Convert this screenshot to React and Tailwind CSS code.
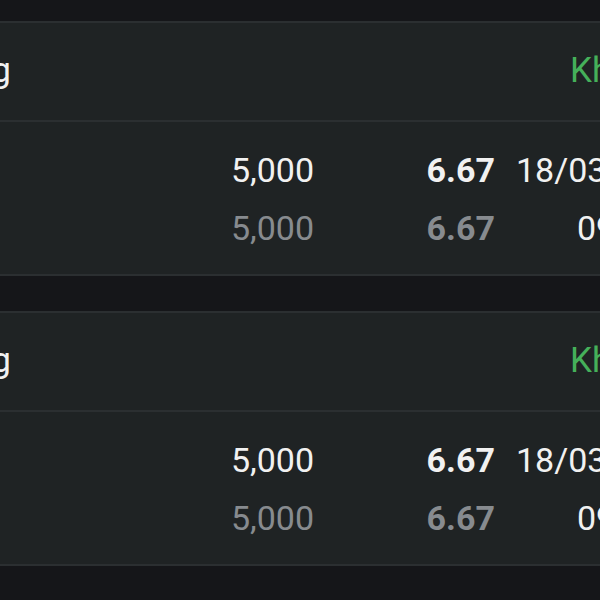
import React from 'react';

const orders = [
  { id: 1, label: 'Lệnh thường', status: 'Khớp', qty: '5,000', price: '6.67', date: '18/03/2024', time: '09:15:32' },
  { id: 2, label: 'Lệnh thường', status: 'Khớp', qty: '5,000', price: '6.67', date: '18/03/2024', time: '09:15:32' },
];

const OrderCard = ({ order }) => {
  return (
    <div className="mb-[35px] border-y-2 border-[#2b2f31] bg-[#1f2324]">
      {/* Header */}
      <div className="h-[99px] flex items-center justify-between border-b-2 border-[#2b2f31] text-[35px]">
        <div className="w-[11px] flex justify-end whitespace-nowrap text-[#f1f1f1]">
          <span>{order.label}</span>
        </div>
        <div className="w-[30px] whitespace-nowrap text-[#45b05a]">{order.status}</div>
      </div>

      {/* Body */}
      <div className="pt-[19px] pb-[17px] text-[34px]">
        <div className="h-[58px] leading-[58px] grid grid-cols-[314px_181px_1fr] text-[#f1f1f1]">
          <div className="text-right">{order.qty}</div>
          <div className="text-right font-bold">{order.price}</div>
          <div className="pl-[21px] whitespace-nowrap">{order.date}</div>
        </div>
        <div className="h-[58px] leading-[58px] grid grid-cols-[314px_181px_1fr]">
          <div className="text-right text-[#878b8f]">{order.qty}</div>
          <div className="text-right font-bold text-[#878b8f]">{order.price}</div>
          <div className="pl-[82px] whitespace-nowrap text-[#f1f1f1]">{order.time}</div>
        </div>
      </div>
    </div>
  );
};

export default function App() {
  return (
    <div
      className="w-[600px] h-[600px] overflow-hidden bg-[#151619] pt-[21px]"
      style={{ fontFamily: 'Roboto, "Noto Sans", sans-serif' }}
    >
      {orders.map((o) => (
        <OrderCard key={o.id} order={o} />
      ))}
    </div>
  );
}
